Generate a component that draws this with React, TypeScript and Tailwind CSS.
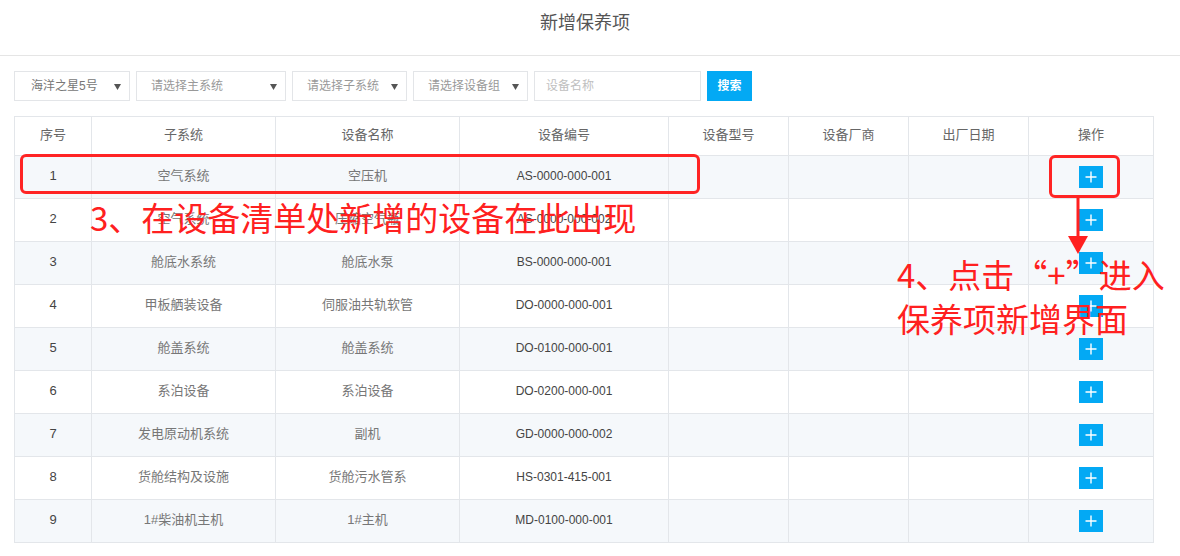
import React from "react";

interface IRow {
  id: number;
  sub: string;
  name: string;
  code: string;
}

const rows: IRow[] = [
  { id: 1, sub: "空气系统", name: "空压机", code: "AS-0000-000-001" },
  { id: 2, sub: "空气系统", name: "压缩空气瓶", code: "AS-0000-000-002" },
  { id: 3, sub: "舱底水系统", name: "舱底水泵", code: "BS-0000-000-001" },
  { id: 4, sub: "甲板舾装设备", name: "伺服油共轨软管", code: "DO-0000-000-001" },
  { id: 5, sub: "舱盖系统", name: "舱盖系统", code: "DO-0100-000-001" },
  { id: 6, sub: "系泊设备", name: "系泊设备", code: "DO-0200-000-001" },
  { id: 7, sub: "发电原动机系统", name: "副机", code: "GD-0000-000-002" },
  { id: 8, sub: "货舱结构及设施", name: "货舱污水管系", code: "HS-0301-415-001" },
  { id: 9, sub: "1#柴油机主机", name: "1#主机", code: "MD-0100-000-001" },
];

const headers = ["序号", "子系统", "设备名称", "设备编号", "设备型号", "设备厂商", "出厂日期", "操作"];
const widths = [77, 184, 184, 209, 120, 120, 120, 125];

const Caret: React.FC = () => (
  <svg width="7" height="7" viewBox="0 0 7 7" className="shrink-0">
    <path d="M0 1 L7 1 L3.5 7 Z" fill="#555" />
  </svg>
);

const Select: React.FC<{ label: string; w: string; pl: string; color: string }> = ({ label, w, pl, color }) => (
  <div className={`${w} ${pl} h-[30px] border border-[#e3e5e8] flex items-center justify-between pr-[8px]`}>
    <span className={`text-[12px] ${color}`}>{label}</span>
    <Caret />
  </div>
);

const PlusBtn: React.FC = () => (
  <div className="w-[24px] h-[22px] bg-[#03a9f4] flex items-center justify-center">
    <svg width="12" height="12" viewBox="0 0 12 12">
      <path d="M6 0.5 V11.5 M0.5 6 H11.5" stroke="#fff" strokeWidth="1.4" />
    </svg>
  </div>
);

const cjk = { fontFamily: '"Noto Sans CJK SC", sans-serif' };

export default function App() {
  return (
    <div
      className="relative w-[1180px] h-[556px] bg-white overflow-hidden"
      style={{ fontFamily: '"Liberation Sans", "Noto Sans CJK SC", sans-serif' }}
    >
      <div className="h-[56px] border-b border-[#e5e5e5] flex items-center justify-center pb-[8px] pr-[10px]">
        <span className="text-[18px] text-[#555]">新增保养项</span>
      </div>

      <div className="flex items-center gap-[6px] pl-[14px] mt-[15px]">
        <Select label="海洋之星5号" w="w-[116px]" pl="pl-[16px]" color="text-[#777]" />
        <Select label="请选择主系统" w="w-[150px]" pl="pl-[14px]" color="text-[#999]" />
        <Select label="请选择子系统" w="w-[115px]" pl="pl-[14px]" color="text-[#999]" />
        <Select label="请选择设备组" w="w-[115px]" pl="pl-[14px]" color="text-[#999]" />
        <div className="w-[167px] h-[30px] border border-[#e3e5e8] flex items-center pl-[11px]">
          <span className="text-[12px] text-[#c0c0c0]">设备名称</span>
        </div>
        <button className="w-[45px] h-[30px] bg-[#03a9f4] text-white text-[12px] font-bold">搜索</button>
      </div>

      <table className="table-fixed border-collapse ml-[14px] mt-[15px] w-[1139px]">
        <colgroup>
          {widths.map((w, i) => (
            <col key={i} style={{ width: w }} />
          ))}
        </colgroup>
        <thead>
          <tr className="h-[39px]">
            {headers.map((h) => (
              <th key={h} className="border border-[#e3e6ea] text-[13px] font-normal text-[#666] pb-[2px]">
                {h}
              </th>
            ))}
          </tr>
        </thead>
        <tbody>
          {rows.map((r) => (
            <tr key={r.id} className={r.id % 2 === 1 ? "h-[43px] bg-[#f5f8fb]" : "h-[43px] bg-white"}>
              <td className="border border-[#e3e6ea] text-center text-[13px] text-[#444] pb-[3px]">{r.id}</td>
              <td className="border border-[#e3e6ea] text-center text-[13px] text-[#777] pb-[3px]">{r.sub}</td>
              <td className="border border-[#e3e6ea] text-center text-[13px] text-[#777] pb-[3px]">{r.name}</td>
              <td className="border border-[#e3e6ea] text-center text-[12px] text-[#444] pb-[3px]">{r.code}</td>
              <td className="border border-[#e3e6ea]"></td>
              <td className="border border-[#e3e6ea]"></td>
              <td className="border border-[#e3e6ea]"></td>
              <td className="border border-[#e3e6ea]">
                <div className="flex justify-center">
                  <PlusBtn />
                </div>
              </td>
            </tr>
          ))}
        </tbody>
      </table>

      {/* annotations */}
      <div className="absolute left-[20px] top-[154px] w-[680px] h-[40px] border-[3px] border-[#ff2424] rounded-[6px]" />
      <div
        className="absolute left-[90px] top-[201px] text-[33px] leading-none text-[#ff2020] whitespace-nowrap"
        style={cjk}
      >
        3、在设备清单处新增的设备在此出现
      </div>
      <div className="absolute left-[1049px] top-[155px] w-[71px] h-[43px] border-[3px] border-[#ff2424] rounded-[6px]" />
      <svg className="absolute left-[1066px] top-[198px]" width="24" height="58" viewBox="0 0 24 58">
        <path d="M12 0 V42" stroke="#ff2020" strokeWidth="3" />
        <path d="M2 38 L22 38 L12 56 Z" fill="#ff2020" />
      </svg>
      <div
        className="absolute left-[897px] top-[252px] text-[33px] leading-[44px] text-[#ff2020] whitespace-nowrap"
        style={cjk}
      >
        <div>4、点击“+”进入</div>
        <div>保养项新增界面</div>
      </div>
    </div>
  );
}
